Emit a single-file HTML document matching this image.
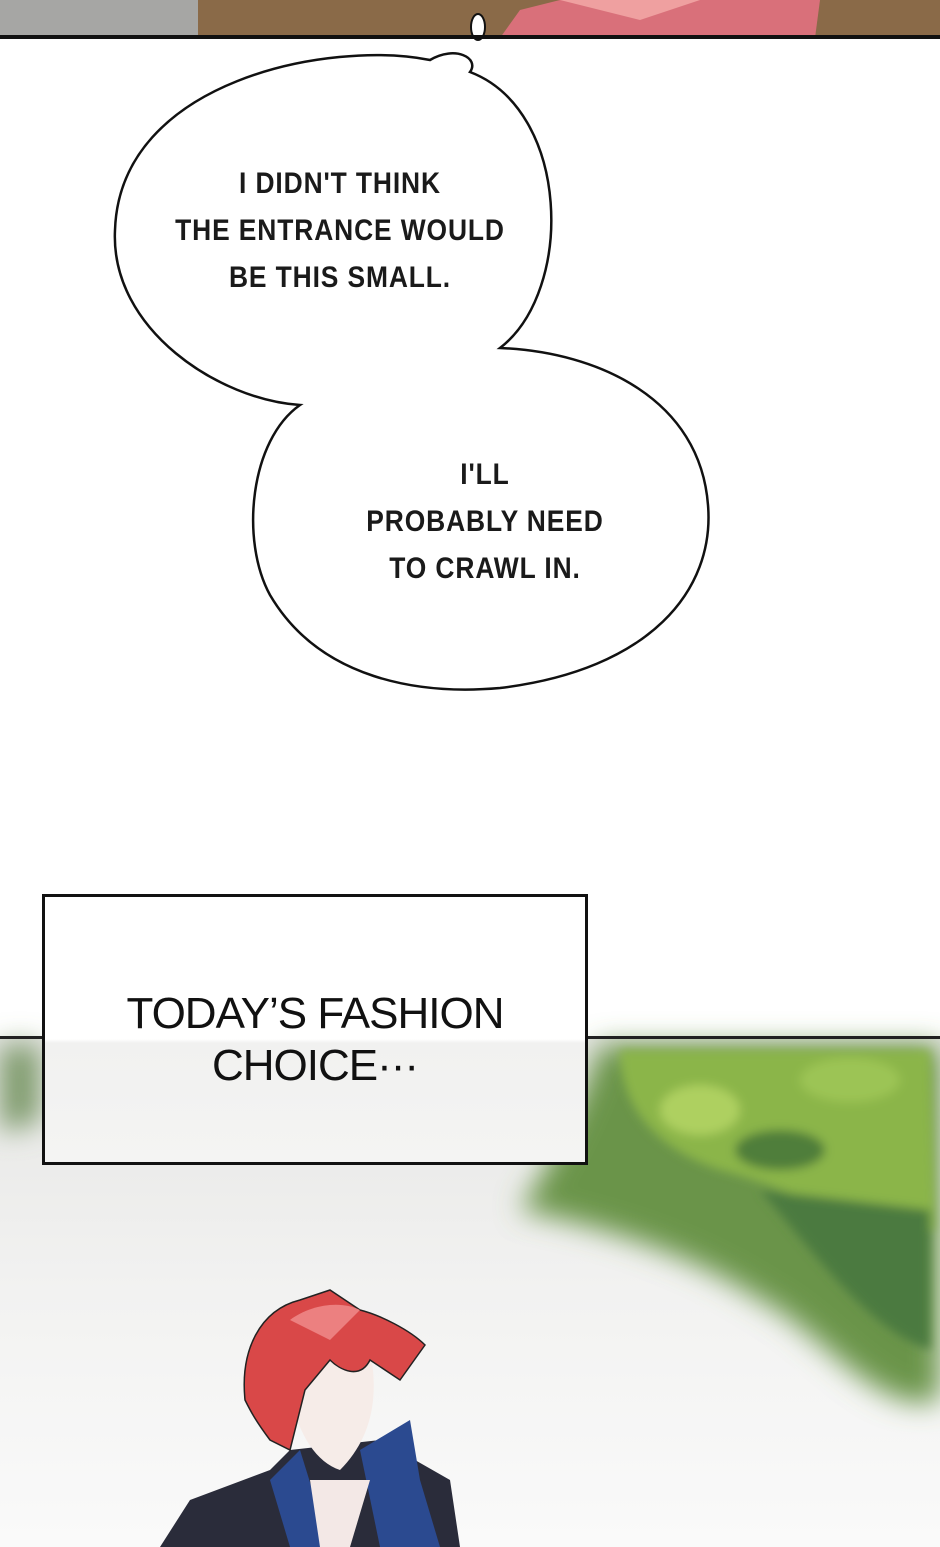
<!DOCTYPE html>
<html><head><meta charset="utf-8"><style>
html,body{margin:0;padding:0;width:940px;height:1547px;overflow:hidden;background:#fff;position:relative;font-family:"Liberation Sans",sans-serif}
.t{position:absolute;color:#1a1a1a;font-size:30px;font-weight:bold;text-align:center;letter-spacing:1px;line-height:47px;font-family:"Liberation Sans Narrow","Liberation Sans",sans-serif;transform:scaleX(0.88)}
</style></head><body>
<svg width="940" height="1547" style="position:absolute;left:0;top:0">
<defs>
<linearGradient id="bg" x1="0" y1="0" x2="0" y2="1"><stop offset="0" stop-color="#e6e6e4"/><stop offset=".5" stop-color="#f2f2f1"/><stop offset="1" stop-color="#fafafa"/></linearGradient>
<filter id="bl"><feGaussianBlur stdDeviation="14"/></filter>
<filter id="bl2"><feGaussianBlur stdDeviation="5"/></filter>
</defs>
<rect x="0" y="0" width="200" height="38" fill="#a6a6a4"/>
<rect x="198" y="0" width="742" height="38" fill="#8a6a48"/>
<path d="M500,38 L520,10 L560,0 L820,0 L815,38 Z" fill="#d9707a"/>
<path d="M560,0 L640,20 L700,0 Z" fill="#efa0a0"/>
<ellipse cx="478" cy="27" rx="7" ry="13" fill="#fff" stroke="#111" stroke-width="2"/>
<rect x="0" y="35" width="940" height="4" fill="#111"/>
<path d="M500,348 C575,290 570,110 470,72 C480,58 455,45 430,60 C330,40 120,80 115,230 C110,330 220,400 300,405 C250,440 240,540 270,595 C320,680 420,695 500,688 C650,670 715,590 708,505 C700,400 600,352 500,348 Z" fill="#fff" stroke="#111" stroke-width="2.5"/>
<rect x="0" y="1038" width="940" height="509" fill="url(#bg)"/>
<g filter="url(#bl)">
<path d="M600,1045 L940,1045 L940,1400 C880,1420 820,1330 760,1300 C700,1260 620,1230 520,1210 C560,1150 590,1080 600,1045 Z" fill="#6a9448"/>
<path d="M0,1045 L40,1045 L40,1120 C20,1130 0,1130 0,1130 Z" fill="#7d9a6a"/>
</g>
<g filter="url(#bl2)">
<path d="M620,1050 L930,1050 L935,1230 C880,1240 800,1190 720,1170 C660,1150 620,1110 620,1050 Z" fill="#8bb548"/>
<ellipse cx="700" cy="1110" rx="40" ry="25" fill="#aed060"/>
<ellipse cx="850" cy="1080" rx="50" ry="22" fill="#9cc455"/>
<ellipse cx="780" cy="1150" rx="45" ry="20" fill="#4f7e3a"/>
<path d="M760,1190 L930,1210 L930,1350 C870,1330 820,1260 760,1190 Z" fill="#4b7a40"/>
</g>
<rect x="0" y="1036" width="940" height="3" fill="#222"/>
<path d="M160,1547 L190,1500 L270,1470 L290,1450 L380,1440 L450,1480 L460,1547 Z" fill="#2a2c3a"/>
<path d="M270,1480 L300,1450 L330,1547 L290,1547 Z" fill="#2b4a90"/>
<path d="M360,1450 L410,1420 L420,1480 L440,1547 L380,1547 Z" fill="#2b4a90"/>
<path d="M310,1480 L370,1480 L350,1547 L320,1547 Z" fill="#f3e8e6"/>
<path d="M285,1360 C290,1320 330,1340 370,1350 C380,1400 370,1440 340,1470 C310,1460 290,1420 285,1360 Z" fill="#f6ece8"/>
<path d="M245,1400 C240,1350 260,1310 300,1300 L330,1290 L345,1300 L360,1310 C380,1315 410,1330 425,1345 L400,1380 L370,1360 C360,1380 340,1370 330,1360 L305,1390 L290,1450 L270,1440 C255,1420 250,1410 245,1400 Z" fill="#d94848" stroke="#222" stroke-width="1.5"/>
<path d="M290,1320 C310,1305 340,1300 360,1310 L330,1340 Z" fill="#ec8080"/>
</svg>
<div class="t" style="left:150px;top:160px;width:380px">I DIDN'T THINK<br>THE ENTRANCE WOULD<br>BE THIS SMALL.</div>
<div class="t" style="left:340px;top:451px;width:290px">I'LL<br>PROBABLY NEED<br>TO CRAWL IN.</div>
<div style="position:absolute;left:42px;top:894px;width:540px;height:265px;border:3px solid #111;background:linear-gradient(#fff 0,#fff 142px,#f1f1f0 146px,#f4f4f3 100%)"></div>
<div style="position:absolute;left:60px;top:988px;width:510px;text-align:center;font-size:44px;line-height:52px;color:#111;font-family:'Liberation Sans Narrow','Liberation Sans',sans-serif;letter-spacing:-1px">TODAY’S FASHION<br>CHOICE···</div>
</body></html>
